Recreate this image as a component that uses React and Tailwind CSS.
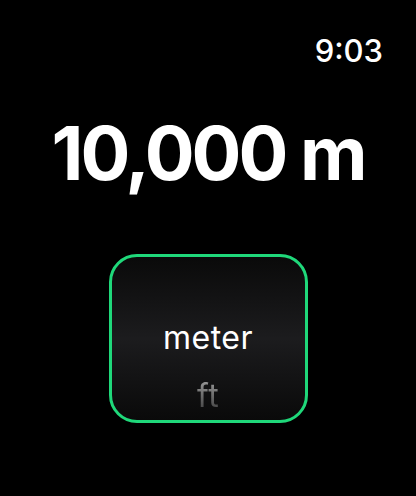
import React from 'react';

export default function App() {
  return (
    <div
      className="w-[416px] h-[496px] bg-black text-white overflow-hidden flex flex-col"
      style={{ fontFamily: 'Inter, "Noto Sans", sans-serif' }}
    >
      <div className="flex justify-end pr-[33px] pt-[32px] h-[70px]">
        <span className="text-[31px] leading-[38px] font-medium">9:03</span>
      </div>

      <div className="flex justify-center mt-[43px]">
        <span className="text-[74px] leading-[80px] font-bold tracking-[-3px]">10,000 m</span>
      </div>

      <div className="flex justify-center mt-[61px]">
        <div className="w-[199px] h-[169px] rounded-[28px] border-[3px] border-[#1fd87a] bg-gradient-to-b from-[#0a0a0a] via-[#1c1c1e] to-[#0a0a0a] flex flex-col items-center">
          <span className="mt-[63px] text-[32px] leading-[36px] tracking-[0.5px] text-white">meter</span>
          <span className="mt-[22px] text-[32px] leading-[36px] tracking-[0.5px] bg-gradient-to-b from-[#a0a0a0] to-[#3a3a3a] bg-clip-text text-transparent">ft</span>
        </div>
      </div>
    </div>
  );
}
